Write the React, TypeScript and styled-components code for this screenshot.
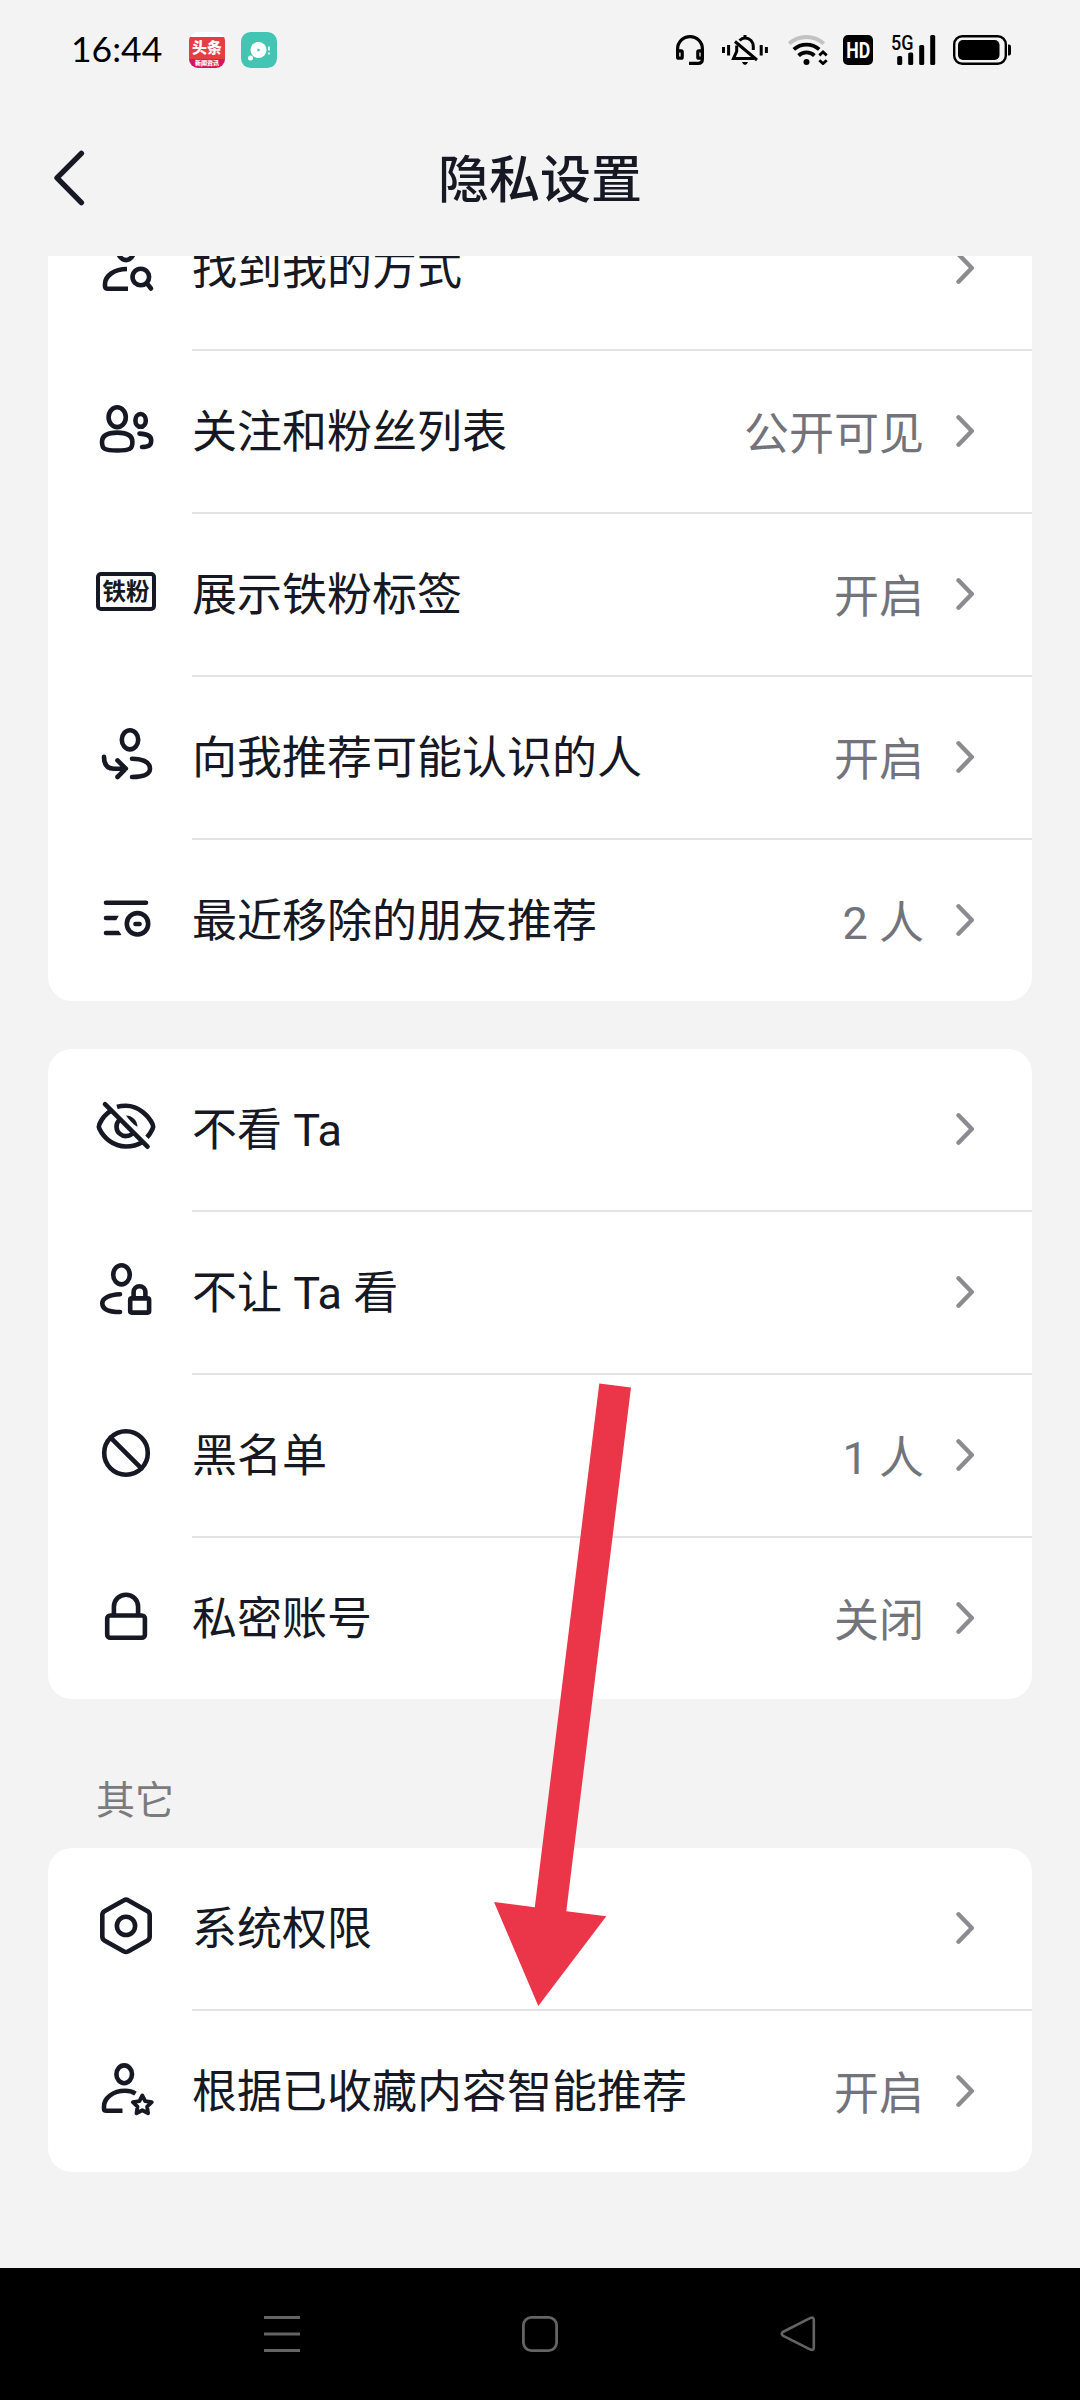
import React from "react";
import styled, { createGlobalStyle } from "styled-components";

const INK = "#161823";

const GlobalStyle = createGlobalStyle`
  * { box-sizing: border-box; }
  body {
    margin: 0;
    background: #f3f3f3;
    font-family: Roboto, "Noto Sans CJK SC", sans-serif;
    color: ${INK};
  }
  svg { display: block; flex: none; }
`;

const Screen = styled.div`
  position: relative;
  display: flex;
  flex-direction: column;
  width: 1080px;
  height: 2400px;
  overflow: hidden;
  background: #f3f3f3;
`;

const StatusBar = styled.header`
  display: flex;
  align-items: center;
  height: 100px;
  padding: 0 69px 0 71px;
  color: #000;
`;

const Clock = styled.time`
  width: 118px;
  font-family: Lato, sans-serif;
  font-size: 35.5px;
  line-height: 98px;
  padding-bottom: 2px;
`;

const NotificationIcons = styled.div`
  display: flex;
  flex: 1;
  gap: 16px;
`;

const NewsBadge = styled.span`
  display: flex;
  flex-direction: column;
  width: 36px;
  height: 36px;
  border-radius: 9px;
  overflow: hidden;
  background: linear-gradient(#fff 0 5px, #e53e42 5px 27px, #d81561 27px);
  color: #fff;
  text-align: center;
  font-weight: 900;
`;

const NewsTitle = styled.span`
  margin-top: 6px;
  font-size: 15px;
  line-height: 20px;
  white-space: nowrap;
`;

const NewsStrip = styled.span`
  margin-top: 1px;
  font-size: 6px;
  line-height: 7px;
  white-space: nowrap;
`;

const SystemIcons = styled.div`
  display: flex;
  align-items: center;
`;

const Gap = styled.span<{ $w: number }>`
  width: ${(p) => p.$w}px;
`;

const TitleBar = styled.div`
  display: grid;
  grid-template-columns: 84px 1fr 84px;
  align-items: center;
  height: 156px;
  padding: 0 24px;
`;

const BackButton = styled.button`
  display: flex;
  width: 84px;
  height: 84px;
  padding: 0 0 0 28px;
  border: 0;
  background: none;
  align-items: center;
  justify-content: flex-start;
`;

const Title = styled.h1`
  margin: 0;
  padding-top: 6px;
  text-align: center;
  font-size: 51px;
  font-weight: 500;
  line-height: 150px;
`;

const Scroller = styled.main`
  flex: 1;
  min-height: 0;
  padding: 0 48px;
  overflow: hidden;
`;

const Card = styled.section<{ $top: number }>`
  margin-top: ${(p) => p.$top}px;
  border-radius: 24px;
  background: #fff;
`;

const SectionLabel = styled.h2`
  margin: 0;
  height: 149px;
  padding: 73px 0 0 48px;
  font-size: 39px;
  font-weight: 400;
  line-height: 58px;
  color: #7b7b7e;
`;

const Row = styled.div`
  display: flex;
  height: 161px;
  align-items: center;
  padding: 0 58px 0 48px;
`;

const Divider = styled.hr`
  height: 2px;
  margin: 0 0 0 144px;
  border: 0;
  background: #e3e3e4;
`;

const Label = styled.span`
  flex: 1;
  margin-left: 36px;
  padding-top: 2px;
  font-size: 45px;
  line-height: 159px;
  white-space: nowrap;
`;

const Value = styled.span`
  margin-right: 30px;
  padding-top: 7px;
  font-size: 45px;
  line-height: 154px;
  color: #73747b;
  white-space: nowrap;
`;

const TagIcon = styled.span`
  display: flex;
  align-items: center;
  justify-content: center;
  width: 60px;
  height: 39px;
  margin-bottom: 6px;
  border: 4px solid ${INK};
  border-radius: 5px;
  font-size: 23.5px;
  font-weight: 700;
  line-height: 30px;
  white-space: nowrap;
`;

const NavBar = styled.nav`
  display: flex;
  align-items: center;
  justify-content: center;
  gap: 222px;
  height: 132px;
  background: #000;
`;

const ArrowOverlay = styled.svg`
  position: absolute;
  left: 494px;
  top: 1383px;
`;

const RowSvg = ({ children }: { children: React.ReactNode }) => (
  <svg
    width="60"
    height="61"
    viewBox="0 0 60 61"
    fill="none"
    stroke={INK}
    strokeWidth="4.6"
    strokeLinecap="round"
    strokeLinejoin="round"
    overflow="visible"
  >
    {children}
  </svg>
);

const FindMeIcon = () => (
  <RowSvg>
    <ellipse cx="30" cy="12.8" rx="7.8" ry="9.3" />
    <path d="M31 31C18 31 9 38 9 46v2Q9 50.8 12 50.8H32" strokeLinecap="butt" />
    <circle cx="44.8" cy="39" r="8.3" />
    <path d="M51 45.5L55 50.5" />
  </RowSvg>
);

const FollowersIcon = () => (
  <RowSvg>
    <ellipse cx="21.2" cy="16.2" rx="8.6" ry="9.9" />
    <path d="M21.2 31.6C29.5 31.6 36.4 34 36.4 41C36.4 48 34 49.5 21.2 49.5C8.4 49.5 6 48 6 41C6 34 13 31.6 21.2 31.6Z" />
    <ellipse cx="44.6" cy="19.4" rx="5.2" ry="6.4" />
    <path d="M43.5 32.6C51 32.8 55.2 35 55.2 39.5C55.2 45 52 45.8 46 46" />
  </RowSvg>
);

const SuggestIcon = () => (
  <RowSvg>
    <ellipse cx="34" cy="12.8" rx="8.2" ry="9.6" />
    <path d="M36 31.7C46 31.7 54 35 54 41.5C54 48.5 46 50 36 50" />
    <path d="M8 29.8C8 37.5 11 41.7 18 41.7H29.5M21.5 33.4L29.8 41.7L21.5 50" />
  </RowSvg>
);

const RemovedIcon = () => (
  <RowSvg>
    <path d="M10 12.7H50M10 28H22M10 43H24" />
    <path d="M25 25L21.5 31M24 40L28 46" stroke="#fff" strokeWidth="3" />
    <circle cx="41.5" cy="33.8" r="10.7" />
    <path d="M39.4 34H43.6" strokeWidth="4.4" />
  </RowSvg>
);

const HideEyeIcon = () => (
  <RowSvg>
    <path
      d="M21 7.9C24 7 27 6.8 30 6.8C43 6.8 53 17.5 56.6 25.2Q57.6 27.6 56.6 29.8Q54.5 34.5 51 38.4"
      strokeLinecap="butt"
    />
    <path
      d="M15.2 11.5C9.5 15 5.5 20.5 3.4 25.2Q2.4 27.6 3.4 29.8C7.5 38.5 17 47.5 30 47.5C36 47.5 41.5 46 46 43.3"
      strokeLinecap="butt"
    />
    <path d="M23 21.2A9.2 9.2 0 0 0 37 34" strokeLinecap="butt" />
    <path d="M30 16.4A11.4 11.4 0 0 1 41.4 27.8C37 25.5 33.5 21 30 16.4Z" fill={INK} stroke="none" />
    <path d="M9 5.2L51.5 47.7" />
  </RowSvg>
);

const PersonLockIcon = () => (
  <RowSvg>
    <ellipse cx="25.5" cy="12.8" rx="8.3" ry="9.6" />
    <path d="M24 32.2C13.5 32.7 6.3 36 6.3 41.2C6.3 47.5 13 50 24 50" />
    <rect x="34.2" y="36.4" width="18.9" height="14.2" rx="1.5" />
    <path d="M37.6 35V30.1a5.9 5.9 0 0 1 11.8 0V35" />
  </RowSvg>
);

const BlockIcon = () => (
  <RowSvg>
    <circle cx="30" cy="28" r="21.8" />
    <path d="M14.6 12.6L45.4 43.4" />
  </RowSvg>
);

const LockIcon = () => (
  <RowSvg>
    <rect x="11.2" y="27.5" width="37.7" height="22.3" rx="3" />
    <path d="M17.9 27V18.8a12.1 12.1 0 0 1 24.2 0V27" />
  </RowSvg>
);

const PermissionIcon = () => (
  <RowSvg>
    <path d="M28 2.2Q30 1 32 2.2L51.6 13.2Q53.7 14.4 53.7 17V38.6Q53.7 41.2 51.6 42.4L32 53.4Q30 54.6 28 53.4L8.4 42.4Q6.3 41.2 6.3 38.6V17Q6.3 14.4 8.4 13.2Z" />
    <circle cx="30" cy="27.9" r="9.1" />
  </RowSvg>
);

const StarPersonIcon = () => (
  <RowSvg>
    <ellipse cx="28.2" cy="13.3" rx="7.8" ry="8.9" />
    <path d="M39.5 32.6C36 30.3 33 29.8 29 29.8C17 29.8 8 37 8 45.5V47.5Q8 49.8 10.5 49.8H26.5" strokeLinecap="butt" />
    <path
      d="M46.3 34.4L49.2 40.2L55.8 41.2L51.1 45.7L52.1 52.3L46.3 49.2L40.5 52.3L41.5 45.7L36.8 41.2L43.4 40.2Z"
      strokeWidth="3.8"
    />
  </RowSvg>
);

const Chevron = () => (
  <svg width="20" height="35" viewBox="0 0 20 35" fill="none" stroke="#8b8b90" strokeWidth="4.4" strokeLinecap="round">
    <path d="M4.5 3.3L17.8 17L4.5 30.7" strokeLinejoin="round" />
  </svg>
);

interface Item {
  icon: React.ReactNode;
  label: string;
  value?: string;
}

const people: Item[] = [
  { icon: <FindMeIcon />, label: "找到我的方式" },
  { icon: <FollowersIcon />, label: "关注和粉丝列表", value: "公开可见" },
  { icon: <TagIcon>铁粉</TagIcon>, label: "展示铁粉标签", value: "开启" },
  { icon: <SuggestIcon />, label: "向我推荐可能认识的人", value: "开启" },
  { icon: <RemovedIcon />, label: "最近移除的朋友推荐", value: "2 人" },
];

const visibility: Item[] = [
  { icon: <HideEyeIcon />, label: "不看 Ta" },
  { icon: <PersonLockIcon />, label: "不让 Ta 看" },
  { icon: <BlockIcon />, label: "黑名单", value: "1 人" },
  { icon: <LockIcon />, label: "私密账号", value: "关闭" },
];

const others: Item[] = [
  { icon: <PermissionIcon />, label: "系统权限" },
  { icon: <StarPersonIcon />, label: "根据已收藏内容智能推荐", value: "开启" },
];

const SettingsCard = ({ items, top }: { items: Item[]; top: number }) => (
  <Card $top={top}>
    {items.map((item, i) => (
      <React.Fragment key={item.label}>
        {i > 0 && <Divider />}
        <Row>
          {item.icon}
          <Label>{item.label}</Label>
          {item.value && <Value>{item.value}</Value>}
          <Chevron />
        </Row>
      </React.Fragment>
    ))}
  </Card>
);

const HeadsetIcon = () => (
  <svg width="28" height="30" viewBox="0 0 28 30" fill="none" stroke="#000" strokeWidth="3.2">
    <path d="M1.6 18V14a12.4 12.4 0 0 1 24.8 0V24Q26.4 28.4 22 28.4H13" />
    <rect x="1.6" y="15.8" width="4.6" height="7.4" rx="1" />
    <rect x="21.8" y="15.8" width="4.6" height="7.4" rx="1" />
  </svg>
);

const SilentIcon = () => (
  <svg width="46" height="30" viewBox="0 0 46 30" fill="none" stroke="#000" strokeWidth="3">
    <path d="M1.5 12V18M6.6 10V20.5M39.2 10V20.5M44.4 12V18" />
    <path d="M17.5 5.5C19.2 3.8 21 3 23 3C28 3 31.3 6.8 31.3 11.5V15" />
    <path d="M14.7 10.5V16.5L11.5 23.4H32" />
    <path d="M13 6.5L35 25" />
    <path d="M23 0V3" />
    <path d="M20 27h6q-1 3-3 3t-3-3z" fill="#000" stroke="none" />
  </svg>
);

const WifiIcon = () => (
  <svg width="40" height="30" viewBox="0 0 40 30" fill="none" stroke="#000" strokeWidth="3.8">
    <path d="M1.2 8.6C11 -.2 26 -.2 35.8 8.6" stroke="#c2c2c2" />
    <path d="M5.8 14.4C13 8 24 8 31.2 14.4" />
    <path d="M10.6 20.6C15 16.4 22 16.4 26.4 20.6" />
    <circle cx="18.5" cy="27" r="3" fill="#000" stroke="none" />
    <path d="M31.3 20.4L35 17L38.7 20.4M31.3 25.2L35 28.6L38.7 25.2" strokeWidth="2.8" />
  </svg>
);

const HdIcon = () => (
  <svg width="30" height="30" viewBox="0 0 30 30">
    <rect width="30" height="30" rx="5" />
    <text
      x="3.2"
      y="23"
      fill="#fff"
      fontFamily="Roboto, sans-serif"
      fontSize="22"
      fontWeight="700"
      textLength="24"
      lengthAdjust="spacingAndGlyphs"
    >
      HD
    </text>
  </svg>
);

const SignalIcon = () => (
  <svg width="45" height="30" viewBox="-1 0 45 30" fill="#000" overflow="visible">
    <text
      x="-1"
      y="15"
      fontFamily="Roboto, sans-serif"
      fontSize="20.5"
      fontWeight="500"
      textLength="22.5"
      lengthAdjust="spacingAndGlyphs"
    >
      5G
    </text>
    <rect x="5.2" y="21" width="5" height="9" rx="1.5" />
    <rect x="16.2" y="17.5" width="5" height="12.5" rx="1.5" />
    <rect x="27.2" y="10" width="5" height="20" rx="1.5" />
    <rect x="38.2" y="0" width="5" height="30" rx="1.5" />
  </svg>
);

const BatteryIcon = () => (
  <svg width="58" height="30" viewBox="0 0 58 30">
    <rect x="1.2" y="1.2" width="51.6" height="27.6" rx="8" fill="none" stroke="#000" strokeWidth="2.4" />
    <rect x="5" y="5" width="41.5" height="20" rx="5" />
    <path d="M55 9.5h1q2 0 2 2v7q0 2-2 2h-1z" />
  </svg>
);

const MusicAppIcon = () => (
  <svg width="36" height="36" viewBox="0 0 36 36">
    <rect width="36" height="36" rx="9.5" fill="#42c5b3" />
    <circle cx="17.5" cy="18" r="8" fill="#fff" />
    <circle cx="17.5" cy="18" r="1.3" fill="#42c5b3" />
    <circle cx="9.5" cy="26" r="2.5" fill="#fff" />
    <path d="M28 14.5v4M28 20.5v2" stroke="#fff" strokeWidth="1.6" />
  </svg>
);

export default function App() {
  return (
    <>
      <GlobalStyle />
      <Screen>
        <StatusBar>
          <Clock>16:44</Clock>
          <NotificationIcons>
            <NewsBadge>
              <NewsTitle>头条</NewsTitle>
              <NewsStrip>新闻资讯</NewsStrip>
            </NewsBadge>
            <MusicAppIcon />
          </NotificationIcons>
          <SystemIcons>
            <HeadsetIcon />
            <Gap $w={18} />
            <SilentIcon />
            <Gap $w={20} />
            <WifiIcon />
            <Gap $w={15} />
            <HdIcon />
            <Gap $w={17.5} />
            <SignalIcon />
            <Gap $w={17.5} />
            <BatteryIcon />
          </SystemIcons>
        </StatusBar>
        <TitleBar>
          <BackButton aria-label="返回">
            <svg width="34" height="60" viewBox="0 0 34 60" fill="none" stroke={INK} strokeWidth="5.4" strokeLinecap="round" strokeLinejoin="round">
              <path d="M29.4 5.4L5 29.8L29.4 54.6" />
            </svg>
          </BackButton>
          <Title>隐私设置</Title>
        </TitleBar>
        <Scroller>
          <SettingsCard items={people} top={-68} />
          <SettingsCard items={visibility} top={48} />
          <SectionLabel>其它</SectionLabel>
          <SettingsCard items={others} top={0} />
        </Scroller>
        <NavBar>
          <svg width="36" height="36" viewBox="0 0 36 36" stroke="#646464" strokeWidth="3">
            <path d="M0 1.5H36M0 18H36M0 34.5H36" />
          </svg>
          <svg width="36" height="36" viewBox="0 0 36 36" fill="none" stroke="#646464" strokeWidth="2.8">
            <rect x="1.4" y="1.4" width="33.2" height="33.2" rx="8" />
          </svg>
          <svg width="36" height="36" viewBox="0 0 36 36" fill="none" stroke="#646464" strokeWidth="2.6" strokeLinejoin="round">
            <path d="M2.8 16L30.5 1.9Q33.8 .8 33.8 4V31.5Q33.8 34.7 30.5 33.6L2.8 19.6Q.6 17.8 2.8 16Z" />
          </svg>
        </NavBar>
        <ArrowOverlay width="140" height="624" viewBox="0 0 140 624">
          <path d="M105.3 .6L137 4.6L72.3 528.2L112.3 533.2L44.3 623L0 519L40.8 524.2Z" fill="#eb3549" />
        </ArrowOverlay>
      </Screen>
    </>
  );
}
